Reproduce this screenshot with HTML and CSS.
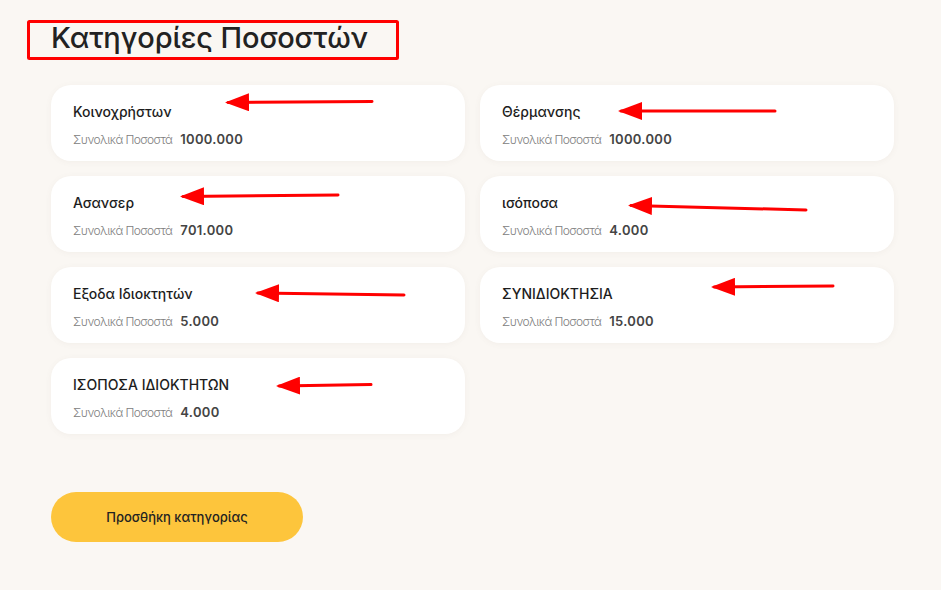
FILE: index.html
```html
<!DOCTYPE html>
<html lang="el">
<head>
  <meta charset="UTF-8">
  <title>Κατηγορίες Ποσοστών</title>
  <link rel="stylesheet" href="styles.css">
</head>
<body>

  <div id="page">
    <h1 class="title">Κατηγορίες Ποσοστών</h1>

    <div class="cards">
      <div class="card">
        <div class="card-name">Κοινοχρήστων</div>
        <div class="card-total"><span class="label">Συνολικά Ποσοστά</span><span class="value">1000.000</span></div>
      </div>
      <div class="card">
        <div class="card-name">Θέρμανσης</div>
        <div class="card-total"><span class="label">Συνολικά Ποσοστά</span><span class="value">1000.000</span></div>
      </div>
      <div class="card">
        <div class="card-name">Ασανσερ</div>
        <div class="card-total"><span class="label">Συνολικά Ποσοστά</span><span class="value">701.000</span></div>
      </div>
      <div class="card">
        <div class="card-name">ισόποσα</div>
        <div class="card-total"><span class="label">Συνολικά Ποσοστά</span><span class="value">4.000</span></div>
      </div>
      <div class="card">
        <div class="card-name">Εξοδα Ιδιοκτητών</div>
        <div class="card-total"><span class="label">Συνολικά Ποσοστά</span><span class="value">5.000</span></div>
      </div>
      <div class="card">
        <div class="card-name">ΣΥΝΙΔΙΟΚΤΗΣΙΑ</div>
        <div class="card-total"><span class="label">Συνολικά Ποσοστά</span><span class="value">15.000</span></div>
      </div>
      <div class="card">
        <div class="card-name">ΙΣΟΠΟΣΑ ΙΔΙΟΚΤΗΤΩΝ</div>
        <div class="card-total"><span class="label">Συνολικά Ποσοστά</span><span class="value">4.000</span></div>
      </div>
    </div>

    <button class="add-btn">Προσθήκη κατηγορίας</button>
  </div>

  <!-- red annotation marks drawn over the screenshot -->
  <svg class="marks" width="941" height="590" viewBox="0 0 941 590">
    <defs>
      <marker id="head" markerWidth="8" markerHeight="6" refX="1" refY="3" orient="auto" markerUnits="strokeWidth">
        <path d="M8 0 L0 3 L8 6 Z" fill="#f00"/>
      </marker>
    </defs>
    <rect x="28.5" y="21.5" width="369" height="37" fill="none" stroke="#f00" stroke-width="3" rx="1"/>
    <g stroke="#f00" stroke-width="3" stroke-linecap="round" marker-start="url(#head)">
      <line x1="228" y1="102.5" x2="372" y2="101.5"/>
      <line x1="621" y1="111" x2="775" y2="111"/>
      <line x1="183" y1="196.5" x2="338" y2="195"/>
      <line x1="631" y1="205.5" x2="806" y2="210"/>
      <line x1="258" y1="293" x2="404" y2="295"/>
      <line x1="714" y1="287" x2="833" y2="286"/>
      <line x1="279" y1="386" x2="371" y2="384.5"/>
    </g>
  </svg>

</body>
</html>
```

FILE: styles.css
```css
body {
  margin: 0;
  background: #faf7f3;
  font-family: Inter, "Noto Sans", sans-serif;
  color: #1f1f1f;
  position: relative;
  height: 590px;
  overflow: hidden;
}
#page {
  padding: 19px 0 0 51px;
}
.title {
  margin: 0;
  font-size: 29px;
  font-weight: 500;
  line-height: 38px;
  letter-spacing: -0.1px;
  color: #222;
}
.cards {
  margin-top: 28px;
  display: grid;
  grid-template-columns: 414px 414px;
  gap: 15px;
}
.card {
  background: #fff;
  border-radius: 20px;
  height: 76px;
  box-sizing: border-box;
  padding: 18px 22px 0;
  box-shadow: 0 1px 6px rgba(120, 100, 80, 0.06);
}
.card-name {
  font-size: 14px;
  font-weight: 500;
  line-height: 18px;
  color: #1d1d1d;
}
.card-total {
  margin-top: 10px;
  display: flex;
  align-items: baseline;
  gap: 8px;
  line-height: 16px;
}
.label {
  font-size: 12px;
  font-weight: 300;
  color: #808080;
  letter-spacing: -0.55px;
}
.value {
  font-size: 13px;
  font-weight: 600;
  color: #444;
  letter-spacing: 0.3px;
}
.add-btn {
  margin-top: 58px;
  width: 252px;
  height: 50px;
  border: none;
  border-radius: 25px;
  background: #fdc53c;
  font-family: inherit;
  font-size: 13px;
  font-weight: 500;
  color: #222;
  cursor: pointer;
}
.marks {
  position: absolute;
  left: 0;
  top: 0;
  pointer-events: none;
}
```
